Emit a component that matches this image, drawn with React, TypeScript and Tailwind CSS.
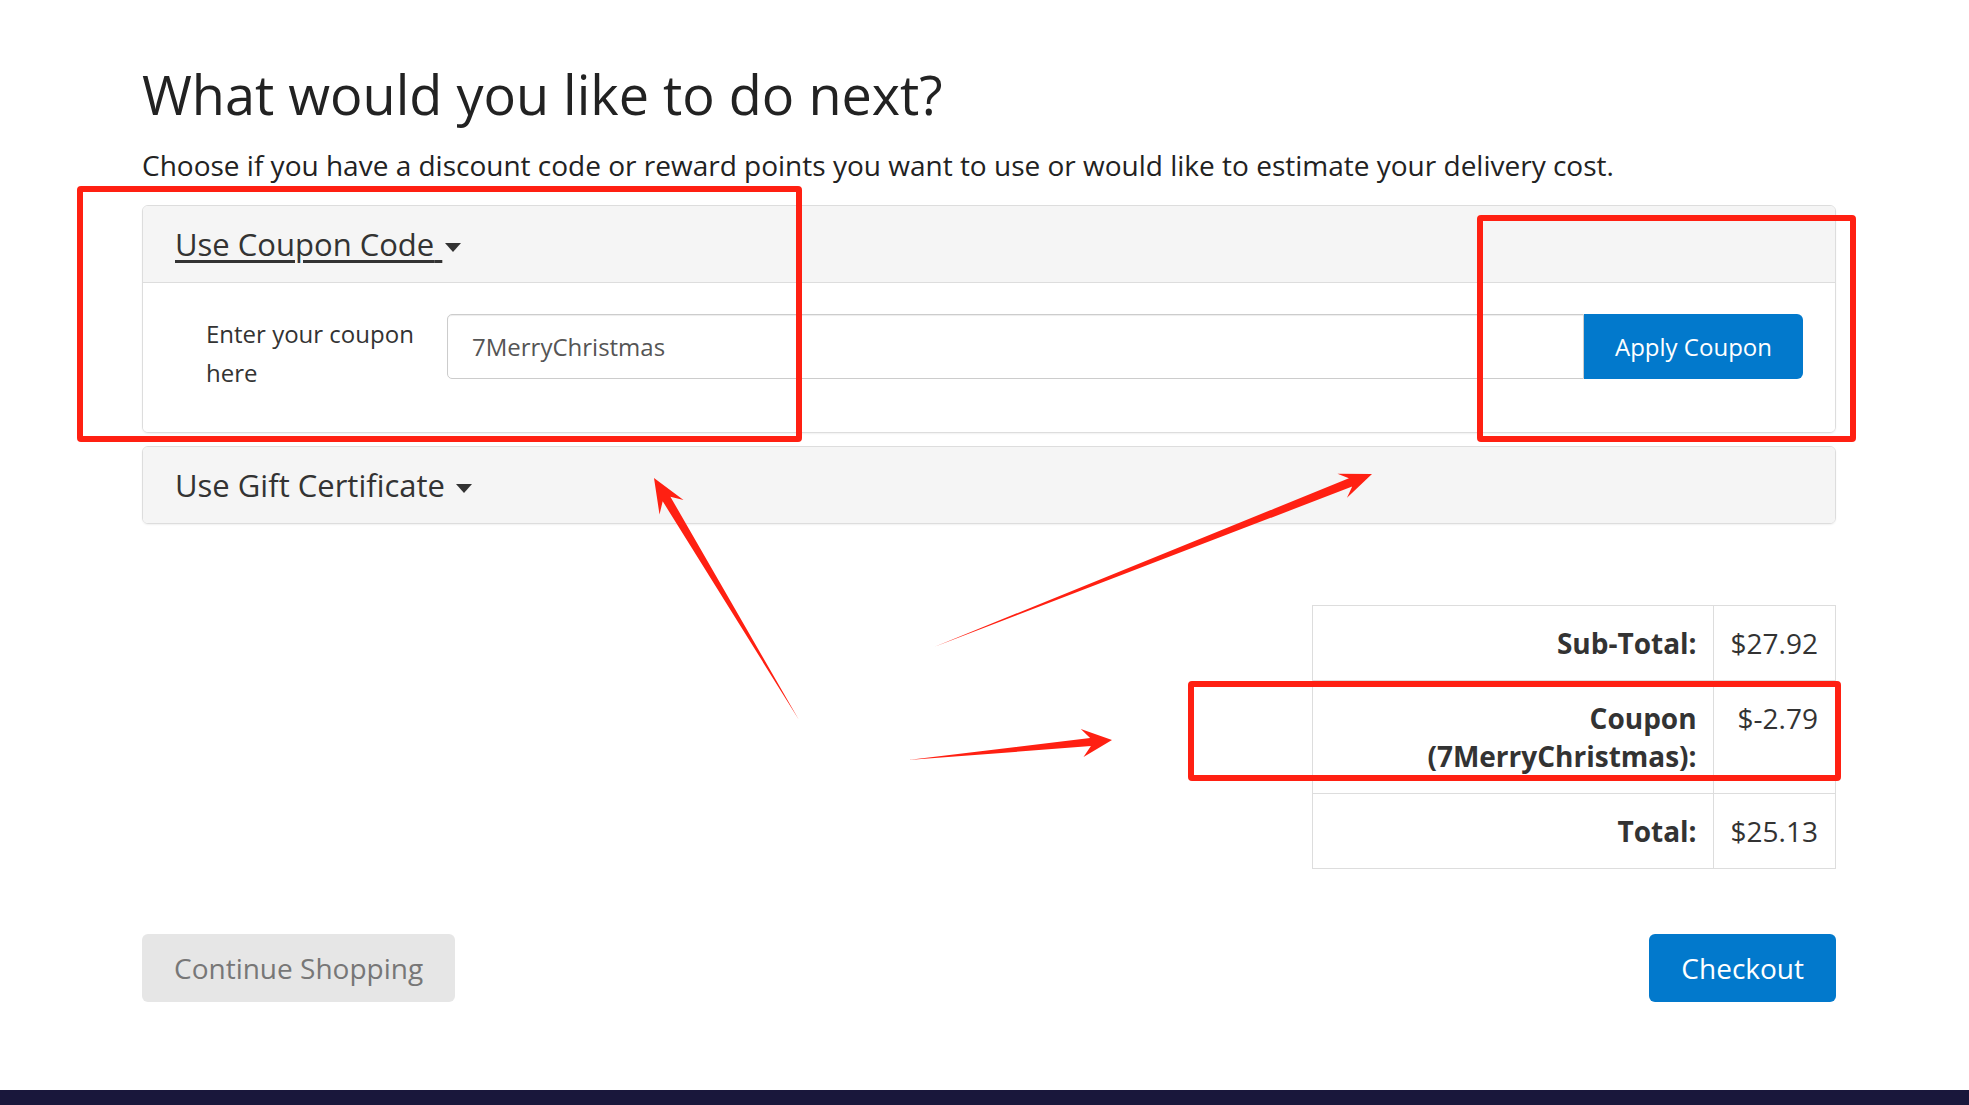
import React from "react";

type Pt = [number, number];

// Tapered annotation arrow: thin tail, barbed head
function arrowPoints(tail: Pt, tip: Pt, shaft: number, headLen: number, headW: number) {
  const dx = tip[0] - tail[0];
  const dy = tip[1] - tail[1];
  const len = Math.hypot(dx, dy);
  const ux = dx / len;
  const uy = dy / len;
  const nx = -uy;
  const ny = ux;
  const bx = tip[0] - ux * headLen * 0.72;
  const by = tip[1] - uy * headLen * 0.72;
  const wx = tip[0] - ux * headLen;
  const wy = tip[1] - uy * headLen;
  const pts: Pt[] = [
    tail,
    [bx + (nx * shaft) / 2, by + (ny * shaft) / 2],
    [wx + (nx * headW) / 2, wy + (ny * headW) / 2],
    tip,
    [wx - (nx * headW) / 2, wy - (ny * headW) / 2],
    [bx - (nx * shaft) / 2, by - (ny * shaft) / 2],
  ];
  return pts.map((p) => `${p[0].toFixed(1)},${p[1].toFixed(1)}`).join(" ");
}

const arrows = [
  { tail: [799, 720] as Pt, tip: [654, 478] as Pt, shaft: 9, headLen: 34, headW: 28 },
  { tail: [934, 647] as Pt, tip: [1372, 474] as Pt, shaft: 9, headLen: 32, headW: 26 },
  { tail: [908, 760] as Pt, tip: [1112, 740] as Pt, shaft: 8, headLen: 30, headW: 28 },
];

function Caret() {
  return (
    <span className="ml-[3px] mt-[7px] inline-block h-0 w-0 border-x-[8px] border-t-[9px] border-x-transparent border-t-[#333]" />
  );
}

export default function App() {
  return (
    <div className="relative min-h-screen overflow-hidden bg-white font-['Open_Sans',sans-serif] text-[#333]">
      <div className="w-[1836px] pl-[142px] pt-[64px]">
        <h1 className="text-[54px] font-normal leading-[60px] text-[#222]">
          What would you like to do next?
        </h1>
        <p className="mt-[21px] text-[28px] leading-[40px] text-[#222]">
          Choose if you have a discount code or reward points you want to use or would like to estimate your delivery cost.
        </p>

        {/* Coupon panel */}
        <div className="mt-[20px] overflow-hidden rounded-[6px] border border-[#ddd] shadow-[0_1px_2px_rgba(0,0,0,0.06)]">
          <div className="flex h-[77px] items-center border-b border-[#ddd] bg-[#f5f5f5] px-[32px]">
            <a className="whitespace-pre text-[31px] text-[#333] underline decoration-[3px] underline-offset-[4px]">
              Use Coupon Code{" "}
            </a>
            <Caret />
          </div>
          <div className="flex items-start bg-white pb-[40px] pl-[63px] pr-[32px] pt-[31px]">
            <label className="w-[241px] shrink-0 pr-[24px] text-[24px] leading-[39px] text-[#333]">
              Enter your coupon here
            </label>
            <div className="flex flex-1">
              <input
                type="text"
                defaultValue="7MerryChristmas"
                className="h-[65px] flex-1 rounded-l-[5px] border border-[#ccc] px-[24px] text-[24px] text-[#555] shadow-[inset_0_1px_1px_rgba(0,0,0,0.075)] outline-none"
              />
              <button className="h-[65px] w-[219px] rounded-r-[6px] bg-[#0279cc] text-[24px] text-white">
                Apply Coupon
              </button>
            </div>
          </div>
        </div>

        {/* Gift certificate panel */}
        <div className="mt-[13px] overflow-hidden rounded-[6px] border border-[#ddd] shadow-[0_1px_2px_rgba(0,0,0,0.06)]">
          <div className="flex h-[76px] items-center bg-[#f5f5f5] px-[32px]">
            <span className="whitespace-pre text-[31px] text-[#333]">Use Gift Certificate </span>
            <Caret />
          </div>
        </div>

        {/* Totals */}
        <div className="mt-[81px] flex justify-end">
          <table className="w-[524px] border-collapse text-[28px] leading-[38px]">
            <tbody>
              <tr>
                <td className="border border-[#ddd] px-[16px] py-[18px] text-right font-bold">Sub-Total:</td>
                <td className="w-[122px] border border-[#ddd] px-[17px] py-[18px] text-right align-top">$27.92</td>
              </tr>
              <tr>
                <td className="border border-[#ddd] px-[16px] py-[18px] text-right font-bold">
                  Coupon
                  <br />
                  (7MerryChristmas):
                </td>
                <td className="border border-[#ddd] px-[17px] py-[18px] text-right align-top">$-2.79</td>
              </tr>
              <tr>
                <td className="border border-[#ddd] px-[16px] py-[18px] text-right font-bold">Total:</td>
                <td className="border border-[#ddd] px-[17px] py-[18px] text-right align-top">$25.13</td>
              </tr>
            </tbody>
          </table>
        </div>

        {/* Buttons */}
        <div className="mt-[65px] flex justify-between">
          <button className="h-[68px] rounded-[6px] bg-[#e6e6e6] px-[32px] text-[28px] text-[#777]">
            Continue Shopping
          </button>
          <button className="h-[68px] rounded-[6px] bg-[#0279cc] px-[32px] text-[28px] text-white">
            Checkout
          </button>
        </div>
      </div>

      <div className="mt-[88px] h-[40px] bg-[#19173b]" />

      {/* Annotation overlay */}
      <div className="pointer-events-none absolute left-[77px] top-[186px] h-[256px] w-[725px] rounded-[4px] border-[6px] border-[#ff2012]" />
      <div className="pointer-events-none absolute left-[1477px] top-[215px] h-[227px] w-[379px] rounded-[4px] border-[6px] border-[#ff2012]" />
      <div className="pointer-events-none absolute left-[1188px] top-[681px] h-[100px] w-[653px] rounded-[4px] border-[6px] border-[#ff2012]" />
      <svg
        className="pointer-events-none absolute left-0 top-0"
        width={1969}
        height={1105}
        viewBox="0 0 1969 1105"
      >
        {arrows.map((a, i) => (
          <polygon key={i} points={arrowPoints(a.tail, a.tip, a.shaft, a.headLen, a.headW)} fill="#ff2012" />
        ))}
      </svg>
    </div>
  );
}
